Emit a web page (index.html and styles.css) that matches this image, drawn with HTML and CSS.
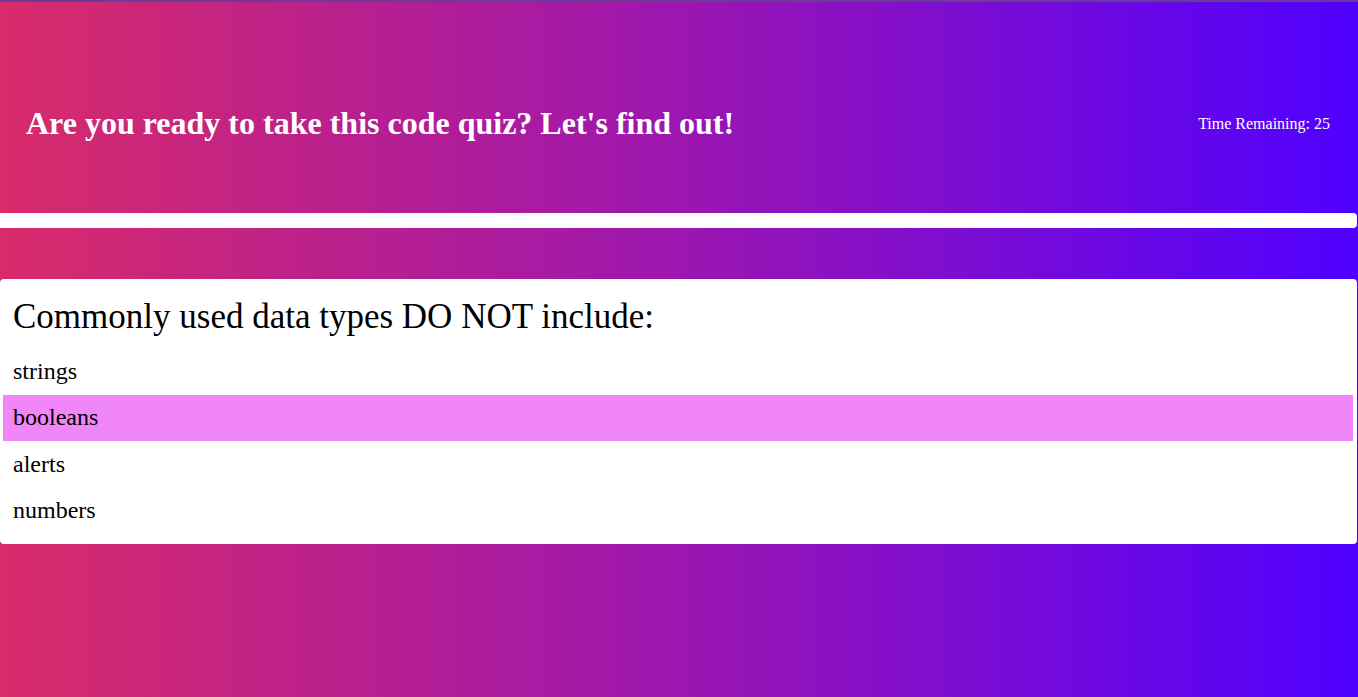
FILE: index.html
```html
<!DOCTYPE html>
<html>
<head>
<meta charset="utf-8">
<link rel="stylesheet" href="styles.css">
</head>
<body>
<div class="topline"></div>
<header class="header">
  <h1 class="title">Are you ready to take this code quiz? Let's find out!</h1>
  <div class="timer">Time Remaining: 25</div>
</header>
<div class="bar"></div>
<main class="card">
  <h2 class="question">Commonly used data types DO NOT include:</h2>
  <ul class="options">
    <li class="option">strings</li>
    <li class="option option-active">booleans</li>
    <li class="option">alerts</li>
    <li class="option">numbers</li>
  </ul>
</main>
</body>
</html>
```
FILE: styles.css
```css
html, body {
  margin: 0;
  padding: 0;
  height: 100%;
}
body {
  font-family: "Liberation Serif", "Times New Roman", serif;
  background: linear-gradient(to right, #d82b6a 0%, #9c16b0 50%, #5000ff 100%);
  overflow: hidden;
}
.topline {
  height: 2px;
  background: #6a3c98;
}
.header {
  height: 211px;
  box-sizing: border-box;
  display: flex;
  align-items: center;
  justify-content: space-between;
  padding: 32px 28px 0 26px;
  color: #fff;
}
.title {
  margin: 0;
  font-size: 32px;
  font-weight: bold;
}
.timer {
  font-size: 16px;
}
.bar {
  height: 15px;
  width: calc(100% - 1px);
  background: #fff;
  border-radius: 0 4px 4px 0;
  margin-bottom: 51px;
}
.card {
  width: calc(100% - 1px);
  box-sizing: border-box;
  background: #fff;
  border-radius: 4px;
  padding: 0 4px 10px 3px;
}
.question {
  margin: 0;
  height: 69px;
  display: flex;
  align-items: center;
  padding: 7px 0 0 10px;
  box-sizing: border-box;
  font-size: 35px;
  font-weight: normal;
}
.options {
  list-style: none;
  margin: 0;
  padding: 0;
}
.option {
  height: 46.5px;
  display: flex;
  align-items: center;
  padding-left: 10px;
  font-size: 24px;
}
.option-active {
  background: #f086f8;
}
```
